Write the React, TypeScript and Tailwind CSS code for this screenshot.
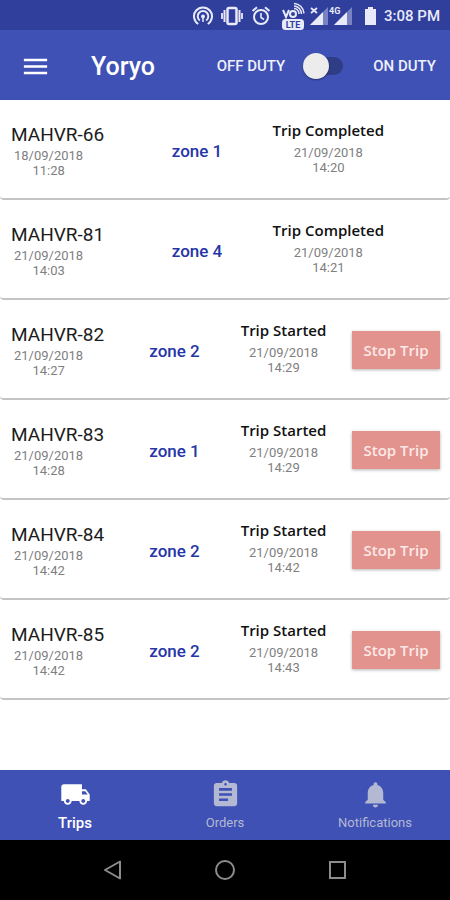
import { useState } from 'react';
import { MdAssignment, MdLocalShipping, MdMenu, MdNotifications } from 'react-icons/md';

type Trip = {
  id: string;
  created: [string, string];
  zone: string;
  status: string;
  updated: [string, string];
  active?: boolean;
};

const trips: Trip[] = [
  { id: 'MAHVR-66', created: ['18/09/2018', '11:28'], zone: 'zone 1', status: 'Trip Completed', updated: ['21/09/2018', '14:20'] },
  { id: 'MAHVR-81', created: ['21/09/2018', '14:03'], zone: 'zone 4', status: 'Trip Completed', updated: ['21/09/2018', '14:21'] },
  { id: 'MAHVR-82', created: ['21/09/2018', '14:27'], zone: 'zone 2', status: 'Trip Started', updated: ['21/09/2018', '14:29'], active: true },
  { id: 'MAHVR-83', created: ['21/09/2018', '14:28'], zone: 'zone 1', status: 'Trip Started', updated: ['21/09/2018', '14:29'], active: true },
  { id: 'MAHVR-84', created: ['21/09/2018', '14:42'], zone: 'zone 2', status: 'Trip Started', updated: ['21/09/2018', '14:42'], active: true },
  { id: 'MAHVR-85', created: ['21/09/2018', '14:42'], zone: 'zone 2', status: 'Trip Started', updated: ['21/09/2018', '14:43'], active: true },
];

const tabs = [
  { label: 'Trips', Icon: MdLocalShipping },
  { label: 'Orders', Icon: MdAssignment },
  { label: 'Notifications', Icon: MdNotifications },
];

function HotspotIcon() {
  return (
    <svg width="20" height="20" viewBox="0 0 20 20" fill="none" stroke="currentColor" strokeWidth="2" aria-hidden="true">
      <path d="M5.200 18a9 9 0 1 1 9.600 0" />
      <path d="M6.800 14.500a5.300 5.300 0 1 1 6.400 0" />
      <circle cx="10" cy="10.500" r="2" fill="currentColor" stroke="none" />
      <path d="M10 11v5" strokeWidth="1.500" />
    </svg>
  );
}

function VibrateIcon() {
  return (
    <svg width="22" height="20" viewBox="0 0 22 20" fill="none" stroke="currentColor" aria-hidden="true">
      <rect x="6.500" y="2" width="9" height="16" rx="1.500" strokeWidth="2.500" />
      <path d="M3.500 4v12M18.500 4v12" strokeWidth="2" />
      <path d="M1 7v6M21 7v6" strokeWidth="1.800" />
    </svg>
  );
}

function AlarmIcon() {
  return (
    <svg width="20" height="20" viewBox="0 0 20 20" fill="none" stroke="currentColor" strokeWidth="2" aria-hidden="true">
      <circle cx="10" cy="11" r="7" />
      <path d="M1.500 5L6 1.300M18.500 5L14 1.300" />
      <path d="M10 7v4.500l3 2" strokeWidth="1.600" />
    </svg>
  );
}

function VolteIcon() {
  return (
    <svg width="24" height="28" viewBox="0 0 24 28" aria-hidden="true">
      <g fill="none" stroke="currentColor" strokeWidth="2">
        <path d="M2 8l3 7 3-7" />
        <circle cx="12" cy="12" r="3" />
        <path d="M13 6.500a5 5 0 0 1 5 5.500M13 4a8 8 0 0 1 7.500 8M13 1.400a10.500 10.500 0 0 1 10 10" strokeWidth="1.500" />
      </g>
      <rect x="1" y="17" width="22" height="11" rx="3.500" fill="currentColor" />
      <text x="12" y="26" textAnchor="middle" fontSize="9" className="fill-[#303f9b] font-bold">LTE</text>
    </svg>
  );
}

function SignalIcon({ mark }: { mark: string }) {
  return (
    <svg width="24" height="20" viewBox="0 0 24 20" aria-hidden="true">
      <path d="M23 1v18H5z" fill="currentColor" opacity="0.4" />
      <path d="M18 6v13H5z" fill="currentColor" />
      {mark === 'x' ? (
        <path d="M6 2l6 5M12 2L6 7" stroke="currentColor" strokeWidth="1.700" />
      ) : (
        <text x="0" y="8" fontSize="9" fill="currentColor" className="font-bold">{mark}</text>
      )}
    </svg>
  );
}

function StatusBar() {
  return (
    <div className="flex h-[30px] items-center justify-end bg-[#303f9b] pr-[10px] pt-[2px] text-[#e8eafa]">
      <div className="flex items-center gap-2">
        <HotspotIcon />
        <VibrateIcon />
        <AlarmIcon />
      </div>
      <div className="ml-[10px] flex items-center">
        <VolteIcon />
        <SignalIcon mark="x" />
        <SignalIcon mark="4G" />
      </div>
      <svg className="ml-3 mr-2" width="11" height="20" viewBox="0 0 11 20" aria-hidden="true">
        <path d="M3 1h5v2h3v16H0V3h3z" fill="currentColor" />
      </svg>
      <span className="text-[15px] font-medium">3:08 PM</span>
    </div>
  );
}

function Header() {
  const [onDuty, setOnDuty] = useState(false);

  return (
    <header className="flex h-[70px] items-center bg-[#3f51b5] pl-5 pr-[14px] pt-[2px] text-white">
      <button type="button" aria-label="Menu">
        <MdMenu size={31} />
      </button>
      <h1 className="ml-10 flex-1 pt-[2px] text-[25px] font-medium">Yoryo</h1>
      <label className="flex items-center text-[15px] font-medium text-[#eef0fb]">
        OFF DUTY
        <span className="relative ml-[18px] mr-7 flex h-7 w-[42px] items-center">
          <input
            type="checkbox"
            role="switch"
            checked={onDuty}
            onChange={(e) => setOnDuty(e.target.checked)}
            className="peer sr-only"
          />
          <span className="ml-2 h-[18px] w-8 rounded-full bg-[#2f3c86]" />
          <span className="absolute left-0 size-[26px] rounded-full bg-[#ececec] shadow-[0_1px_2px_rgba(0,0,0,0.4)] transition-transform peer-checked:translate-x-4" />
        </span>
        ON DUTY
      </label>
    </header>
  );
}

function Stamp({ value }: { value: [string, string] }) {
  return (
    <p className="text-[13px] leading-[15px] text-[#808080]">
      {value[0]}
      <br />
      {value[1]}
    </p>
  );
}

function TripCard({ trip }: { trip: Trip }) {
  const columns = trip.active ? 'grid-cols-[120fr_109fr_109fr_112fr]' : 'grid-cols-3 pr-14';

  return (
    <li className={`grid h-[100px] rounded-[4px] border-b-2 border-[#c4c4c4] bg-white pt-px text-center ${columns}`}>
      <div className="justify-self-start pl-[11px] pt-[22px]">
        <h2 className="text-[19px] leading-6 text-[#1c1c1c]">{trip.id}</h2>
        <div className="mt-px pr-[18px]">
          <Stamp value={trip.created} />
        </div>
      </div>
      <p className="self-center pt-1 text-[17px] font-medium text-[#2635a8]">{trip.zone}</p>
      <div className="pt-[18px]">
        <p className="whitespace-nowrap font-['Open_Sans',sans-serif] text-[15px] font-semibold leading-[22px] text-[#111]">{trip.status}</p>
        <div className="mt-1">
          <Stamp value={trip.updated} />
        </div>
      </div>
      {trip.active && (
        <div className="flex items-center justify-center pl-1 pt-px">
          <button
            type="button"
            className="h-[38px] whitespace-nowrap bg-[#e2938d] px-[11px] font-['Open_Sans',sans-serif] text-[15px] font-semibold text-[#fbe9e7] shadow-[0_1px_3px_rgba(0,0,0,0.3)]"
          >
            Stop Trip
          </button>
        </div>
      )}
    </li>
  );
}

function BottomNav() {
  const [current, setCurrent] = useState('Trips');

  return (
    <nav className="grid h-[70px] grid-cols-3 bg-[#3f51b5]">
      {tabs.map(({ label, Icon }) => (
        <button
          key={label}
          type="button"
          onClick={() => setCurrent(label)}
          className={`flex flex-col items-center pt-[9px] ${
            current === label ? 'text-[15px] font-medium text-white' : 'text-[13px] text-[#b3b8d3]'
          }`}
        >
          <Icon size={31} />
          <span className="mt-[3px] leading-5">{label}</span>
        </button>
      ))}
    </nav>
  );
}

function SystemNav() {
  return (
    <div className="flex h-[60px] items-center justify-center gap-[90px] bg-black text-[#8c8c8c]">
      <button type="button" aria-label="Back">
        <svg width="22" height="22" viewBox="0 0 22 22" fill="none" stroke="currentColor" strokeWidth="2">
          <path d="M18 2.500v17L3 11z" strokeLinejoin="round" />
        </svg>
      </button>
      <button type="button" aria-label="Home">
        <svg width="22" height="22" viewBox="0 0 22 22" fill="none" stroke="currentColor" strokeWidth="2">
          <circle cx="11" cy="11" r="9" />
        </svg>
      </button>
      <button type="button" aria-label="Recent apps">
        <svg width="22" height="22" viewBox="0 0 22 22" fill="none" stroke="currentColor" strokeWidth="2">
          <rect x="4" y="3" width="15" height="16" />
        </svg>
      </button>
    </div>
  );
}

export default function App() {
  return (
    <div className="flex min-h-screen flex-col bg-white font-[Roboto,sans-serif]">
      <StatusBar />
      <Header />
      <main className="flex-1">
        <ul>
          {trips.map((trip) => (
            <TripCard key={trip.id} trip={trip} />
          ))}
        </ul>
      </main>
      <BottomNav />
      <SystemNav />
    </div>
  );
}
